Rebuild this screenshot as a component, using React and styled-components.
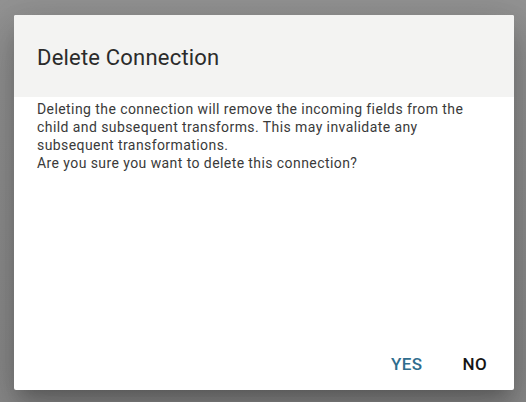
import React from "react";
import styled, { createGlobalStyle } from "styled-components";

const GlobalStyle = createGlobalStyle`
  html, body {
    margin: 0;
    padding: 0;
    background: #8e8e8e;
    font-family: Roboto, "Liberation Sans", sans-serif;
  }
`;

const Backdrop = styled.div`
  width: 526px;
  height: 402px;
  box-sizing: border-box;
  padding: 15px 12px 12px 14px;
  background: linear-gradient(180deg, #939393 0%, #8a8a8a 100%);
`;

const Dialog = styled.section`
  width: 500px;
  height: 375px;
  display: flex;
  flex-direction: column;
  background: #ffffff;
  border-radius: 2px;
  overflow: hidden;
  box-shadow: 0 11px 15px -7px rgba(0, 0, 0, 0.2),
    0 24px 38px 3px rgba(0, 0, 0, 0.14), 0 9px 46px 8px rgba(0, 0, 0, 0.12);
`;

const Header = styled.header`
  height: 82px;
  flex: none;
  display: flex;
  align-items: center;
  padding: 0 23px;
  background: #f3f3f2;
`;

const Title = styled.h2`
  margin: 0;
  font-size: 22px;
  font-weight: 400;
  letter-spacing: 0.2px;
  color: #2b2b2b;
  padding-top: 2px;
`;

const Body = styled.div`
  flex: 1;
  padding: 3px 23px 0;
  font-size: 14px;
  line-height: 18px;
  letter-spacing: 0.42px;
  color: #3a3a3a;
  p {
    margin: 0;
  }
`;

const Actions = styled.footer`
  display: flex;
  justify-content: flex-end;
  gap: 24px;
  padding: 0 19px 10px;
`;

const Button = styled.button`
  border: none;
  background: transparent;
  padding: 6px 8px;
  font-family: inherit;
  font-size: 17px;
  font-weight: 500;
  letter-spacing: 0.4px;
  text-transform: uppercase;
  color: ${(p) => (p.$primary ? "#2f6d8e" : "#151515")};
  cursor: pointer;
`;

export default function App() {
  return (
    <>
      <GlobalStyle />
      <Backdrop>
        <Dialog>
          <Header>
            <Title>Delete Connection</Title>
          </Header>
          <Body>
            <p>
              Deleting the connection will remove the incoming fields from the
              child and subsequent transforms. This may invalidate any
              subsequent transformations.
            </p>
            <p>Are you sure you want to delete this connection?</p>
          </Body>
          <Actions>
            <Button $primary>Yes</Button>
            <Button>No</Button>
          </Actions>
        </Dialog>
      </Backdrop>
    </>
  );
}
